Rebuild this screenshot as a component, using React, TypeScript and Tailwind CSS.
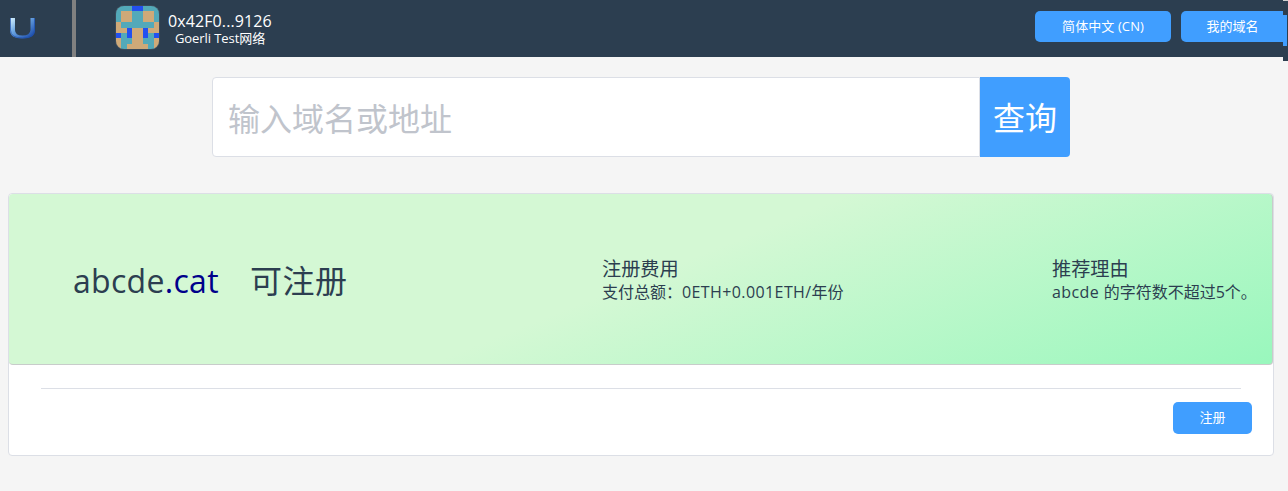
import React from "react";

const COLORS: Record<string, string> = { b: "#2350f0", t: "#cfa978", g: "#53a9b9" };

const avatarRows = [
  "gggbbggg",
  "gttggttg",
  "gttggttg",
  "tggggggt",
  "ttbttbtt",
  "bgbttbgb",
  "tggttggt",
  "tgttttgt",
];

function Avatar() {
  return (
    <svg className="h-[43px] w-[43px] shrink-0 rounded-[8px] shadow-[0_0_1px_#b5b5b5]" viewBox="0 0 8 8" shapeRendering="crispEdges">
      {avatarRows.flatMap((row, y) =>
        row.split("").map((c, x) => <rect key={`${x}-${y}`} x={x} y={y} width="1" height="1" fill={COLORS[c]} />)
      )}
    </svg>
  );
}

function Logo() {
  return (
    <svg className="h-[22px] w-[26px]" viewBox="0 0 26 22">
      <defs>
        <linearGradient id="u" x1="0" y1="0" x2="1" y2="1">
          <stop offset="0" stopColor="#d8f4ff" />
          <stop offset="0.4" stopColor="#6ba5e2" />
          <stop offset="1" stopColor="#0c3ba0" />
        </linearGradient>
      </defs>
      <path d="M0 1H5V13Q5 18.500 12.500 18.500T20.500 13V1H25V13Q25 21.500 12.500 21.500T0 13Z" fill="url(#u)" />
      <path d="M0.500 1V13Q0.500 21 12.500 21T24.500 13V1" fill="none" stroke="#1d4fad" strokeOpacity="0.7" />
    </svg>
  );
}

export default function App() {
  return (
    <div className="h-[491px] w-[1288px] overflow-hidden bg-[#f5f5f5] font-['Open_Sans','Noto_Sans_CJK_SC',sans-serif] text-[#2c3e50]">
      <header className="flex h-[57px] bg-[#2c3e50] text-white">
        <div className="w-[76px] shrink-0 border-r-4 border-[#808080] pt-[17px] pl-[10px]"><Logo /></div>
        <div className="flex pt-[6px] pl-10">
          <Avatar />
          <div className="ml-[9px] flex w-[105px] flex-col pt-[6px] whitespace-nowrap">
            <span className="text-[16px] leading-[18px] tracking-[0.1px]">0x42F0...9126</span>
            <span className="pl-[7px] text-[13px] leading-[16px] tracking-[-0.08px]">Goerli Test网络</span>
          </div>
        </div>
        <div className="relative ml-auto flex gap-[10px] pt-[11px] text-[13px]">
          <button className="h-[31px] w-[136px] rounded-[5px] bg-[#409eff] tracking-[0.1px]">简体中文 (CN)</button>
          <button className="h-[31px] w-[107px] rounded-l-[5px] bg-[#409eff] pr-[4px]">我的域名</button>
          <div className="absolute top-0 right-0 h-[61px] w-[5px] bg-[#2c3e50]">
            <div className="h-px bg-[#d0d0d0]" />
            <div className="mt-[14px] h-[31px] w-[4px] bg-[#409eff]" />
          </div>
        </div>
      </header>
      <div className="mt-5 ml-[212px] flex h-20 w-[858px]">
        <div className="flex flex-1 items-center rounded-l-[4px] border border-[#dcdfe6] bg-white pt-[3px] pl-[15px] text-[32px] text-[#c0c4cc]">输入域名或地址</div>
        <button className="w-[90px] rounded-r-[4px] bg-[#409eff] pt-[2px] text-[32px] text-white">查询</button>
      </div>
      <main className="mt-9 ml-2 h-[263px] w-[1266px] rounded-[4px] border border-[#dcdfe6] bg-white">
        <section className="flex h-[171px] rounded-[4px] border-r border-b border-[#c8ccca] bg-[linear-gradient(-22deg,#99f7bd_0%,#d4f8d4_50%,#d4f8d4_100%)] whitespace-nowrap">
          <div className="flex w-[593px] pt-[63px] pl-16 text-[32px] leading-[48px]">
            <span className="w-[177px] tracking-[0.3px]">abcde<span className="text-[#00008b]">.cat</span></span>
            <span className="tracking-[0.5px]">可注册</span>
          </div>
          <div className="w-[450px] pt-[63px]">
            <h2 className="text-[19.2px] leading-[24px]">注册费用</h2>
            <p className="text-[16px] leading-[22px]">支付总额：<span className="tracking-[0.4px]">0ETH+0.001ETH/</span>年份</p>
          </div>
          <div className="pt-[63px]">
            <h2 className="text-[19.2px] leading-[24px]">推荐理由</h2>
            <p className="text-[16px] leading-[22px]"><span className="tracking-[0.4px]">abcde </span>的字符数不超过5个。</p>
          </div>
        </section>
        <div className="mt-[23px] ml-8 h-px w-[1200px] bg-[#dcdfe6]" />
        <div className="mt-[13px] mr-[21px] flex justify-end">
          <button className="h-8 w-[79px] rounded-[5px] bg-[#409eff] text-[13px] text-white">注册</button>
        </div>
      </main>
    </div>
  );
}
